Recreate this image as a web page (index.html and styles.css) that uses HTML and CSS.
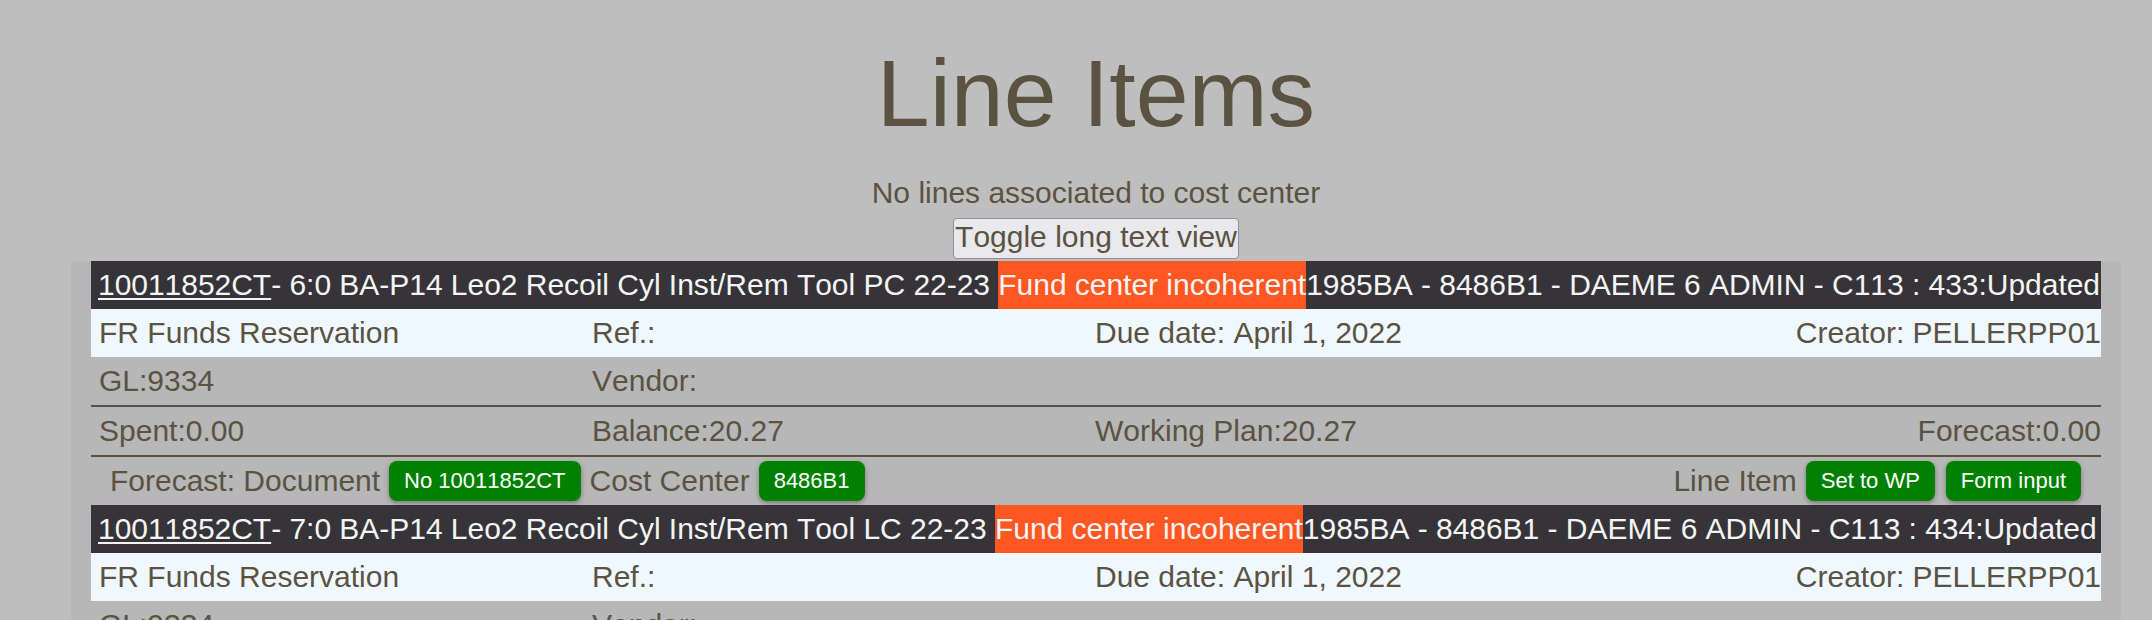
FILE: index.html
```html
<!DOCTYPE html>
<html lang="en">
<head>
<meta charset="utf-8">
<title>Line Items</title>
<link rel="stylesheet" href="styles.css">
</head>
<body>
<div class="page">
  <h1 class="title">Line Items</h1>
  <p class="note">No lines associated to cost center</p>
  <div class="toggle-wrap"><button class="toggle" type="button">Toggle long text view</button></div>

  <div class="items">
    <section class="item">
      <div class="item-head"><a class="doc-link" href="#">10011852CT</a>- 6:0 BA-P14 Leo2 Recoil Cyl Inst/Rem Tool PC 22-23 <span class="flag">Fund center incoherent</span>1985BA - 8486B1 - DAEME 6 ADMIN - C113 : 433:Updated</div>
      <div class="cells light">
        <span class="cell">FR Funds Reservation</span>
        <span class="cell">Ref.:</span>
        <span class="cell">Due date: April 1, 2022</span>
        <span class="cell end">Creator: PELLERPP01</span>
      </div>
      <div class="cells ruled">
        <span class="cell">GL:9334</span>
        <span class="cell">Vendor:</span>
        <span class="cell"></span>
        <span class="cell end"></span>
      </div>
      <div class="cells ruled">
        <span class="cell">Spent:0.00</span>
        <span class="cell">Balance:20.27</span>
        <span class="cell">Working Plan:20.27</span>
        <span class="cell end">Forecast:0.00</span>
      </div>
      <div class="actions">
        <div class="group">
          <span>Forecast: Document</span>
          <button class="btn" type="button">No 10011852CT</button>
          <span>Cost Center</span>
          <button class="btn" type="button">8486B1</button>
        </div>
        <div class="group">
          <span>Line Item</span>
          <button class="btn" type="button">Set to WP</button>
          <button class="btn" type="button">Form input</button>
        </div>
      </div>
    </section>

    <section class="item">
      <div class="item-head"><a class="doc-link" href="#">10011852CT</a>- 7:0 BA-P14 Leo2 Recoil Cyl Inst/Rem Tool LC 22-23 <span class="flag">Fund center incoherent</span>1985BA - 8486B1 - DAEME 6 ADMIN - C113 : 434:Updated</div>
      <div class="cells light">
        <span class="cell">FR Funds Reservation</span>
        <span class="cell">Ref.:</span>
        <span class="cell">Due date: April 1, 2022</span>
        <span class="cell end">Creator: PELLERPP01</span>
      </div>
      <div class="cells ruled">
        <span class="cell">GL:9334</span>
        <span class="cell">Vendor:</span>
        <span class="cell"></span>
        <span class="cell end"></span>
      </div>
      <div class="cells ruled">
        <span class="cell">Spent:0.00</span>
        <span class="cell">Balance:20.27</span>
        <span class="cell">Working Plan:20.27</span>
        <span class="cell end">Forecast:0.00</span>
      </div>
      <div class="actions">
        <div class="group">
          <span>Forecast: Document</span>
          <button class="btn" type="button">No 10011852CT</button>
          <span>Cost Center</span>
          <button class="btn" type="button">8486B1</button>
        </div>
        <div class="group">
          <span>Line Item</span>
          <button class="btn" type="button">Set to WP</button>
          <button class="btn" type="button">Form input</button>
        </div>
      </div>
    </section>
  </div>
</div>
</body>
</html>
```
FILE: styles.css
```css
html, body {
  margin: 0;
  padding: 0;
  background: #bebebe;
}

body {
  font-family: "Liberation Sans", Arial, Helvetica, sans-serif;
  font-kerning: none;
  color: #5b5242;
  font-size: 30px;
}

.page {
  margin: 0 31px 0 71px;
}

.title {
  margin: 38px 0 0;
  font-size: 95px;
  line-height: 110px;
  font-weight: normal;
  text-align: center;
}

.note {
  margin: 28px 0 0;
  font-size: 30px;
  line-height: 34px;
  text-align: center;
}

.toggle-wrap {
  display: flex;
  justify-content: center;
  margin-top: 8px;
}

.toggle {
  font-family: "Liberation Sans", Arial, Helvetica, sans-serif;
  font-kerning: none;
  font-size: 30px;
  line-height: 36px;
  color: #5b5242;
  background: #e9e9ed;
  border: 1px solid #8f8f9d;
  border-radius: 4px;
  padding: 0 1px 3px;
  margin: 0;
}

.items {
  margin-top: 2px;
  background: #b7b7b7;
  padding: 0 20px;
}

.item-head {
  background: #363438;
  color: #f4f4f4;
  line-height: 48px;
  height: 48px;
  padding-left: 7px;
  white-space: nowrap;
  overflow: hidden;
  letter-spacing: -0.03px;
}

.doc-link {
  color: #f4f4f4;
  text-decoration: underline;
  text-decoration-thickness: 2px;
  text-underline-offset: 3px;
}

.flag {
  background: #ff5722;
  color: #f4f4f4;
  display: inline-block;
}

.cells {
  display: grid;
  grid-template-columns: 493fr 503fr 507fr 507fr;
  line-height: 48px;
  height: 48px;
}

.cells.light {
  background: #f0f8ff;
}

.cells.ruled {
  border-bottom: 2px solid #5b5242;
}

.cell {
  padding-left: 8px;
  white-space: nowrap;
}

.cell.end {
  text-align: right;
  padding-left: 0;
}

.actions {
  display: flex;
  justify-content: space-between;
  align-items: center;
  height: 48px;
  padding: 0 20px 0 19px;
}

.group {
  display: flex;
  align-items: center;
  gap: 9px;
  white-space: nowrap;
}

.group .btn + .btn {
  margin-left: 2px;
}

.btn {
  font-family: "Liberation Sans", Arial, Helvetica, sans-serif;
  font-kerning: none;
  font-size: 22px;
  height: 40px;
  line-height: 40px;
  padding: 0 15px;
  margin: 0;
  border: none;
  border-radius: 8px;
  background: #008000;
  color: #ffffff;
  box-shadow: 0 2px 5px rgba(0, 0, 0, 0.35);
}
```
